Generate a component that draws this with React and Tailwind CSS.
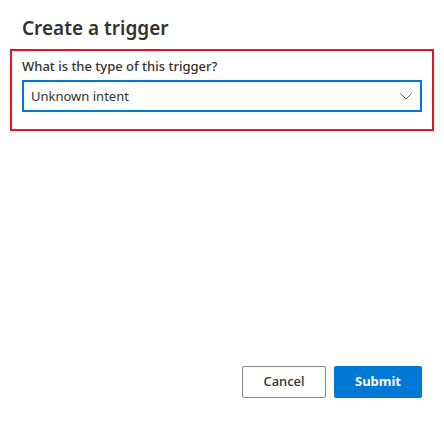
const App = () => {
  return (
    <div className="w-[444px] h-[423px] bg-white flex flex-col text-[#323130]" style={{ fontFamily: '"Noto Sans", "Open Sans", sans-serif' }}>
      {/* Header */}
      <h1 className="pl-[22px] pt-[15px] h-[49px] text-[19px] font-semibold leading-[26px]">Create a trigger</h1>

      {/* Highlighted form section */}
      <div className="mx-[10px] h-[82px] border-2 border-[#e81123] px-[10px] pt-[6px]">
        <label className="block text-[13px] font-medium leading-[18px] mb-[5px]">What is the type of this trigger?</label>
        <div className="h-[32px] border-2 border-[#0078d4] flex items-center justify-between pl-[7px] pr-[8px]">
          <span className="text-[13px] leading-[18px]">Unknown intent</span>
          <svg width="12" height="7" viewBox="0 0 12 7" fill="none" className="mt-[1px]">
            <path d="M0.5 0.5 L6 6 L11.5 0.5" stroke="#605e5c" strokeWidth="1" />
          </svg>
        </div>
      </div>

      {/* Footer */}
      <div className="flex-1" />
      <div className="flex justify-end gap-[8px] pr-[22px] pb-[25px]">
        <button className="w-[84px] h-[32px] border border-[#8a8886] rounded-[2px] bg-white text-[13px] font-medium text-[#323130]">
          Cancel
        </button>
        <button className="w-[88px] h-[32px] rounded-[2px] bg-[#0078d4] text-[13px] font-bold text-white">
          Submit
        </button>
      </div>
    </div>
  );
};

export default App;
